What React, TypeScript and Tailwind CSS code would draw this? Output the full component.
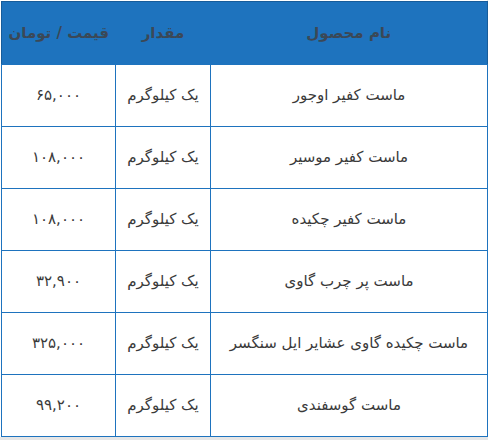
const rows = [
  { name: 'ماست کفیر اوجور', qty: 'یک کیلوگرم', price: '۶۵,۰۰۰' },
  { name: 'ماست کفیر موسیر', qty: 'یک کیلوگرم', price: '۱۰۸,۰۰۰' },
  { name: 'ماست کفیر چکیده', qty: 'یک کیلوگرم', price: '۱۰۸,۰۰۰' },
  { name: 'ماست پر چرب گاوی', qty: 'یک کیلوگرم', price: '۳۲,۹۰۰' },
  { name: 'ماست چکیده گاوی عشایر ایل سنگسر', qty: 'یک کیلوگرم', price: '۳۲۵,۰۰۰' },
  { name: 'ماست گوسفندی', qty: 'یک کیلوگرم', price: '۹۹,۲۰۰' },
];

export default function App() {
  return (
    <div className="h-[440px] w-[488px] bg-[#e6e6e6] overflow-hidden">
      <div className="w-[487px] h-[437px] bg-white pl-[1px] pt-[1px]">
        <table
          dir="rtl"
          className="w-[486px] border-collapse table-fixed text-[15px] text-[#3a3a3a]"
          style={{ fontFamily: '"DejaVu Sans", sans-serif' }}
        >
          <colgroup>
            <col className="w-[277px]" />
            <col className="w-[95px]" />
            <col className="w-[114px]" />
          </colgroup>
          <thead>
            <tr className="h-[63px] bg-[#1e73be] border border-[#175c9a]">
              <th className="font-bold text-[#3b4856] text-center whitespace-nowrap">نام محصول</th>
              <th className="font-bold text-[#3b4856] text-center whitespace-nowrap">مقدار</th>
              <th className="font-bold text-[#3b4856] text-center whitespace-nowrap">قیمت / تومان</th>
            </tr>
          </thead>
          <tbody>
            {rows.map((r) => (
              <tr key={r.name} className="h-[62px]">
                <td className="border border-[#1e73be] text-center whitespace-nowrap">{r.name}</td>
                <td className="border border-[#1e73be] text-center whitespace-nowrap">{r.qty}</td>
                <td className="border border-[#1e73be] text-center whitespace-nowrap">{r.price}</td>
              </tr>
            ))}
          </tbody>
        </table>
      </div>
    </div>
  );
}
